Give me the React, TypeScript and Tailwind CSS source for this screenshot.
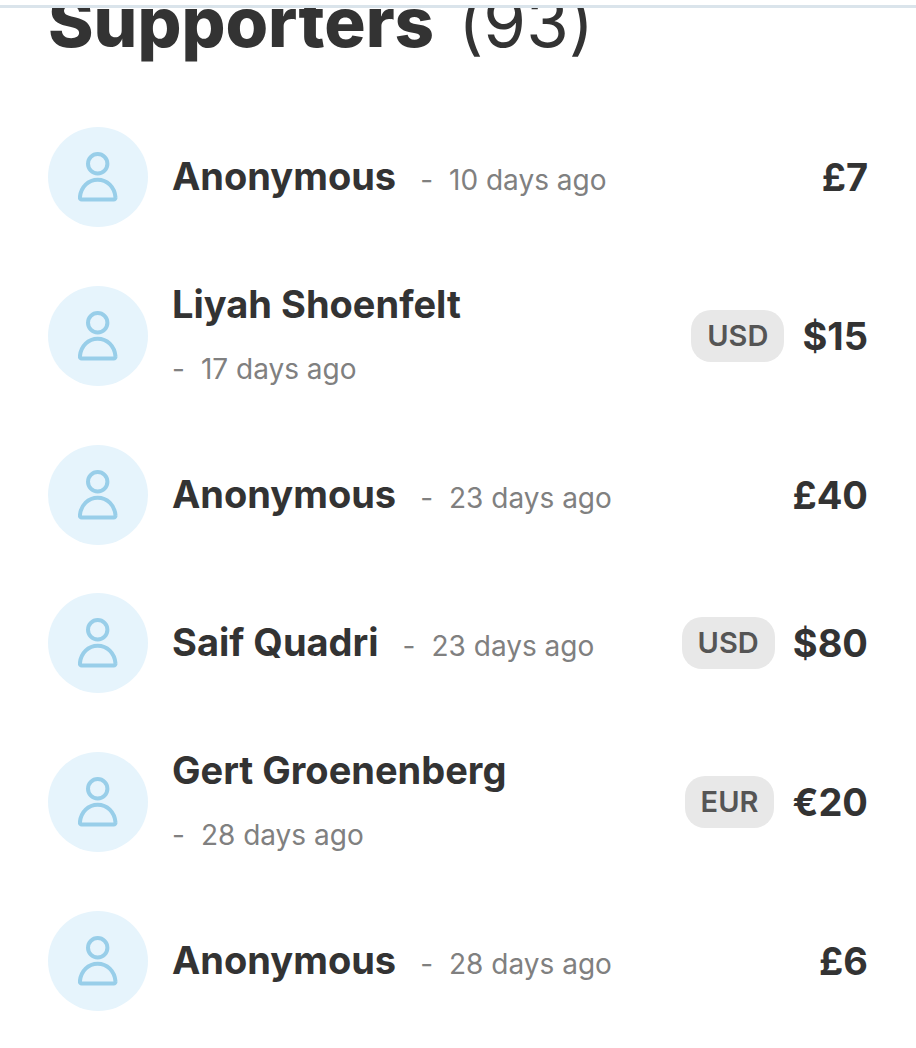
import React from 'react';

interface Supporter {
  name: string;
  when: string;
  amount: string;
  currency?: string;
}

const supporters: Supporter[] = [
  { name: 'Anonymous', when: '10 days ago', amount: '£7' },
  { name: 'Liyah Shoenfelt', when: '17 days ago', amount: '$15', currency: 'USD' },
  { name: 'Anonymous', when: '23 days ago', amount: '£40' },
  { name: 'Saif Quadri', when: '23 days ago', amount: '$80', currency: 'USD' },
  { name: 'Gert Groenenberg', when: '28 days ago', amount: '€20', currency: 'EUR' },
  { name: 'Anonymous', when: '28 days ago', amount: '£6' },
];

function Avatar() {
  return (
    <div className="flex size-[100px] shrink-0 items-center justify-center rounded-full bg-[#e6f4fc]">
      <svg width="40" height="52" viewBox="0 0 40 52" fill="none" stroke="#98cee9" strokeWidth="4" aria-hidden="true">
        <circle cx="19.7" cy="12.7" r="9.7" />
        <path d="M3.700 48.500h32a1.800 1.800 0 0 0 1.800-2C36.700 36 29 28.700 19.700 28.700S2.700 36 1.900 46.500A1.800 1.800 0 0 0 3.700 48.500z" strokeLinejoin="round" />
      </svg>
    </div>
  );
}

function SupporterRow({ supporter }: { supporter: Supporter }) {
  const { name, when, amount, currency } = supporter;

  return (
    <li className="flex items-center gap-6">
      <Avatar />
      {/* the date drops under the name when the two don't fit side by side */}
      <div className="flex min-w-0 flex-1 flex-wrap items-baseline gap-x-6 gap-y-2">
        <span className="text-[38px] leading-[58px] font-bold">{name}</span>
        <span className="flex gap-4 text-[28px] leading-[56px] text-[#808080]">
          <span>-</span>
          <span>{when}</span>
        </span>
      </div>
      <div className="flex shrink-0 items-center gap-[18px]">
        {currency && (
          <span className="rounded-[20px] bg-[#e8e8e8] px-4 text-[29px] leading-[52px] font-semibold text-[#555]">
            {currency}
          </span>
        )}
        <span className="text-[38px] leading-[58px] font-bold">{amount}</span>
      </div>
    </li>
  );
}

export default function App() {
  return (
    <div className="min-h-screen overflow-hidden bg-white font-['Inter',sans-serif] text-[#333]">
      <header className="fixed inset-x-0 top-0 z-10 h-2 border-b-[3px] border-[#dae4eb] bg-white" />
      <main className="px-12 pb-9">
        {/* calt off keeps the parentheses on the text baseline next to the digits */}
        <h1 className="-mt-6 flex gap-6 text-[69px] leading-[92px] font-extrabold [font-feature-settings:'calt'_0]">
          Supporters <span className="font-normal">(93)</span>
        </h1>
        <ul className="mt-[59px] space-y-12">
          {supporters.map((supporter, i) => (
            <SupporterRow key={i} supporter={supporter} />
          ))}
        </ul>
      </main>
    </div>
  );
}
